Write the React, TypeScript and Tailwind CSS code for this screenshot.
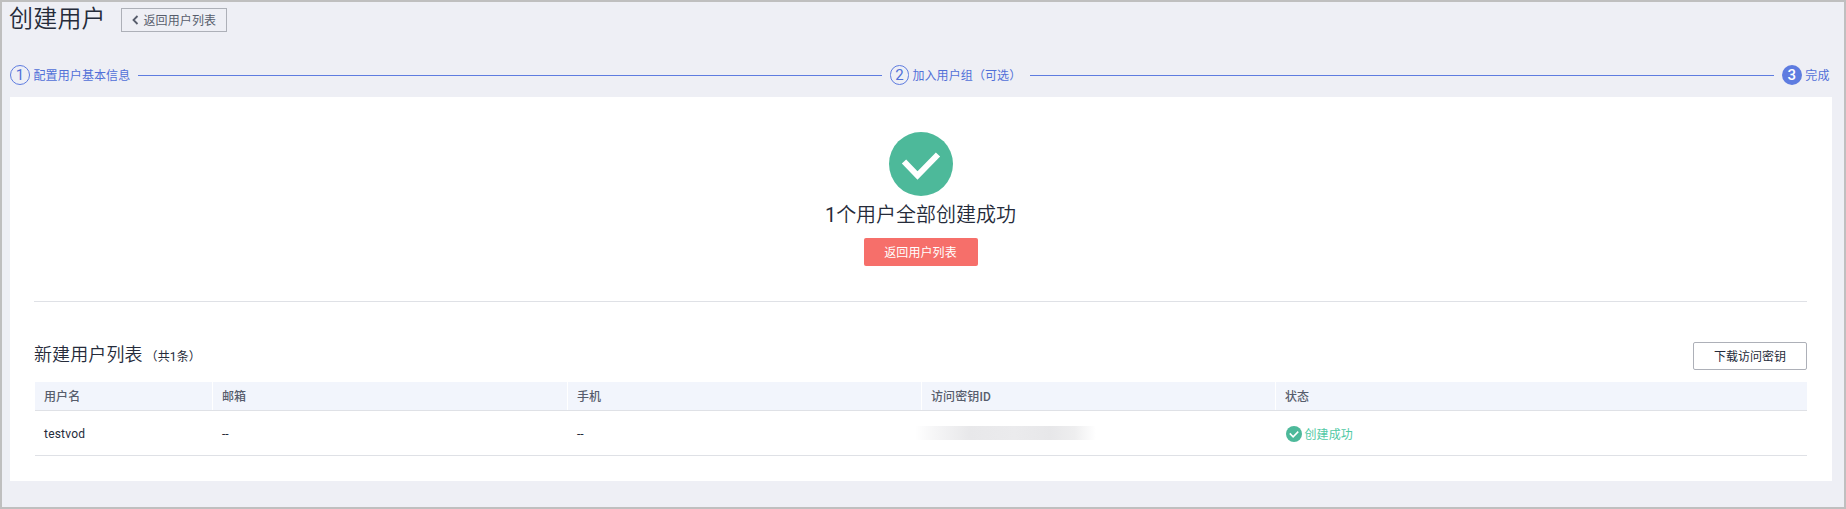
import React from "react";

type Column = { title: string; width: string };

const columns: Column[] = [
  { title: "用户名", width: "w-[178px]" },
  { title: "邮箱", width: "w-[355px]" },
  { title: "手机", width: "w-[354px]" },
  { title: "访问密钥ID", width: "w-[354px]" },
  { title: "状态", width: "flex-1" },
];

function SuccessIcon({ className }: { className: string }) {
  return (
    <svg viewBox="0 0 64 64" className={className} aria-hidden="true">
      <circle cx="32" cy="32" r="32" fill="#4db99a" />
      <path d="M15 29.5 28.5 43.5 49 22.5" fill="none" stroke="#fff" strokeWidth="6" />
    </svg>
  );
}

function Step({ index, label, active = false }: { index: number; label: string; active?: boolean }) {
  return (
    <div className="flex h-5 shrink-0 items-center text-[#5170d8]">
      <span
        className={
          active
            ? "flex size-5 items-center justify-center rounded-full bg-[#5e7ce0] text-[15px] leading-none font-medium text-white"
            : "flex size-5 items-center justify-center rounded-full border border-[#5e7ce0] text-[15px] leading-none"
        }
      >
        {index}
      </span>
      <span className="ml-[3.5px] pt-0.5 pr-[0.5px] text-xs leading-5 tracking-[0.1px] whitespace-nowrap">{label}</span>
    </div>
  );
}

export default function App() {
  return (
    <div className="flex h-[509px] w-[1846px] flex-col overflow-hidden border-2 border-[#bfbfbf] bg-[#eeeff5] pr-3 pl-2 font-[Roboto,'Noto_Sans_CJK_SC',sans-serif] text-xs text-[#252b3a]">
      <header className="flex h-[34px] shrink-0 items-start">
        <h1 className="-ml-px w-[112px] pt-px text-2xl leading-[32px] font-[350] tracking-[0.2px] whitespace-nowrap">创建用户</h1>
        <button className="mt-1.5 flex h-6 w-[106px] items-center border border-[#adb0b8] pl-[10px] text-[#575d6c]">
          <svg viewBox="0 0 7 10" className="mr-[4.5px] h-[10px] w-[7px]">
            <path d="M5.5 1 1.5 5l4 4" fill="none" stroke="currentColor" strokeWidth="1.8" />
          </svg>
          <span className="pt-0.5 leading-5 tracking-[0.1px]">返回用户列表</span>
        </button>
      </header>

      <nav className="mt-[29px] flex h-5 shrink-0 items-center pr-0.5">
        <Step index={1} label="配置用户基本信息" />
        <div className="mr-2 ml-[7px] h-px flex-1 bg-[#5e7ce0]" />
        <div className="w-[132px]">
          <Step index={2} label="加入用户组（可选）" />
        </div>
        <div className="mx-2 h-px flex-1 bg-[#5e7ce0]" />
        <Step index={3} label="完成" active />
      </nav>

      <main className="mt-3 flex h-[384px] shrink-0 flex-col bg-white pr-[25px] pl-6">
        <section className="flex h-[205px] shrink-0 flex-col items-center border-b border-[#dfe1e6] pt-[35px]">
          <SuccessIcon className="size-16 shrink-0" />
          <p className="mt-1 text-xl leading-[30px] font-[350]">
            <span className="font-normal">1</span>个用户全部创建成功
          </p>
          <button className="mt-2 h-7 w-[114px] rounded-xs bg-[#f66f6a] pt-0.5 leading-[26px] tracking-[0.1px] text-white">
            返回用户列表
          </button>
        </section>

        <section className="flex flex-col">
          <div className="mt-10 flex h-7 items-center justify-between">
            <h2 className="flex items-baseline pb-0.5 text-lg leading-7 font-[350] tracking-[0.1px]">
              新建用户列表
              <span className="ml-[3px] text-xs font-normal">（共1条）</span>
            </h2>
            <button className="h-7 w-[114px] rounded-xs border border-[#adb0b8] pt-0.5 leading-6">下载访问密钥</button>
          </div>

          <div className="mt-3 ml-px">
            <div className="flex h-[29px] border-b border-[#dfe1e6] bg-[#f2f5fc]">
              {columns.map((column) => (
                <div
                  key={column.title}
                  className={`${column.width} border-r border-white pt-px pl-[9px] leading-7 font-[550] tracking-[0.1px] text-[#575d6c] last:border-r-0`}
                >
                  {column.title}
                </div>
              ))}
            </div>
            <div className="flex h-[45px] items-center border-b border-[#dfe1e6]">
              <div className="w-[178px] pt-0.5 pl-[9px] tracking-[0.2px]">testvod</div>
              <div className="w-[355px] pt-0.5 pl-[9px]">--</div>
              <div className="w-[354px] pt-0.5 pl-[9px]">--</div>
              <div className="w-[354px]">
                <div className="-ml-[7px] h-[14px] w-[181px] bg-[linear-gradient(90deg,#ffffff_0%,#f6f6f7_10%,#e8e8ea_30%,#ebebed_55%,#e7e7e9_75%,#eeeeef_88%,#ffffff_100%)]" />
              </div>
              <div className="flex flex-1 items-center pt-0.5 pl-[10px] text-[#4fc9a4]">
                <SuccessIcon className="size-4" />
                <span className="ml-[2.5px] pt-px tracking-[0.1px]">创建成功</span>
              </div>
            </div>
          </div>
        </section>
      </main>
    </div>
  );
}
